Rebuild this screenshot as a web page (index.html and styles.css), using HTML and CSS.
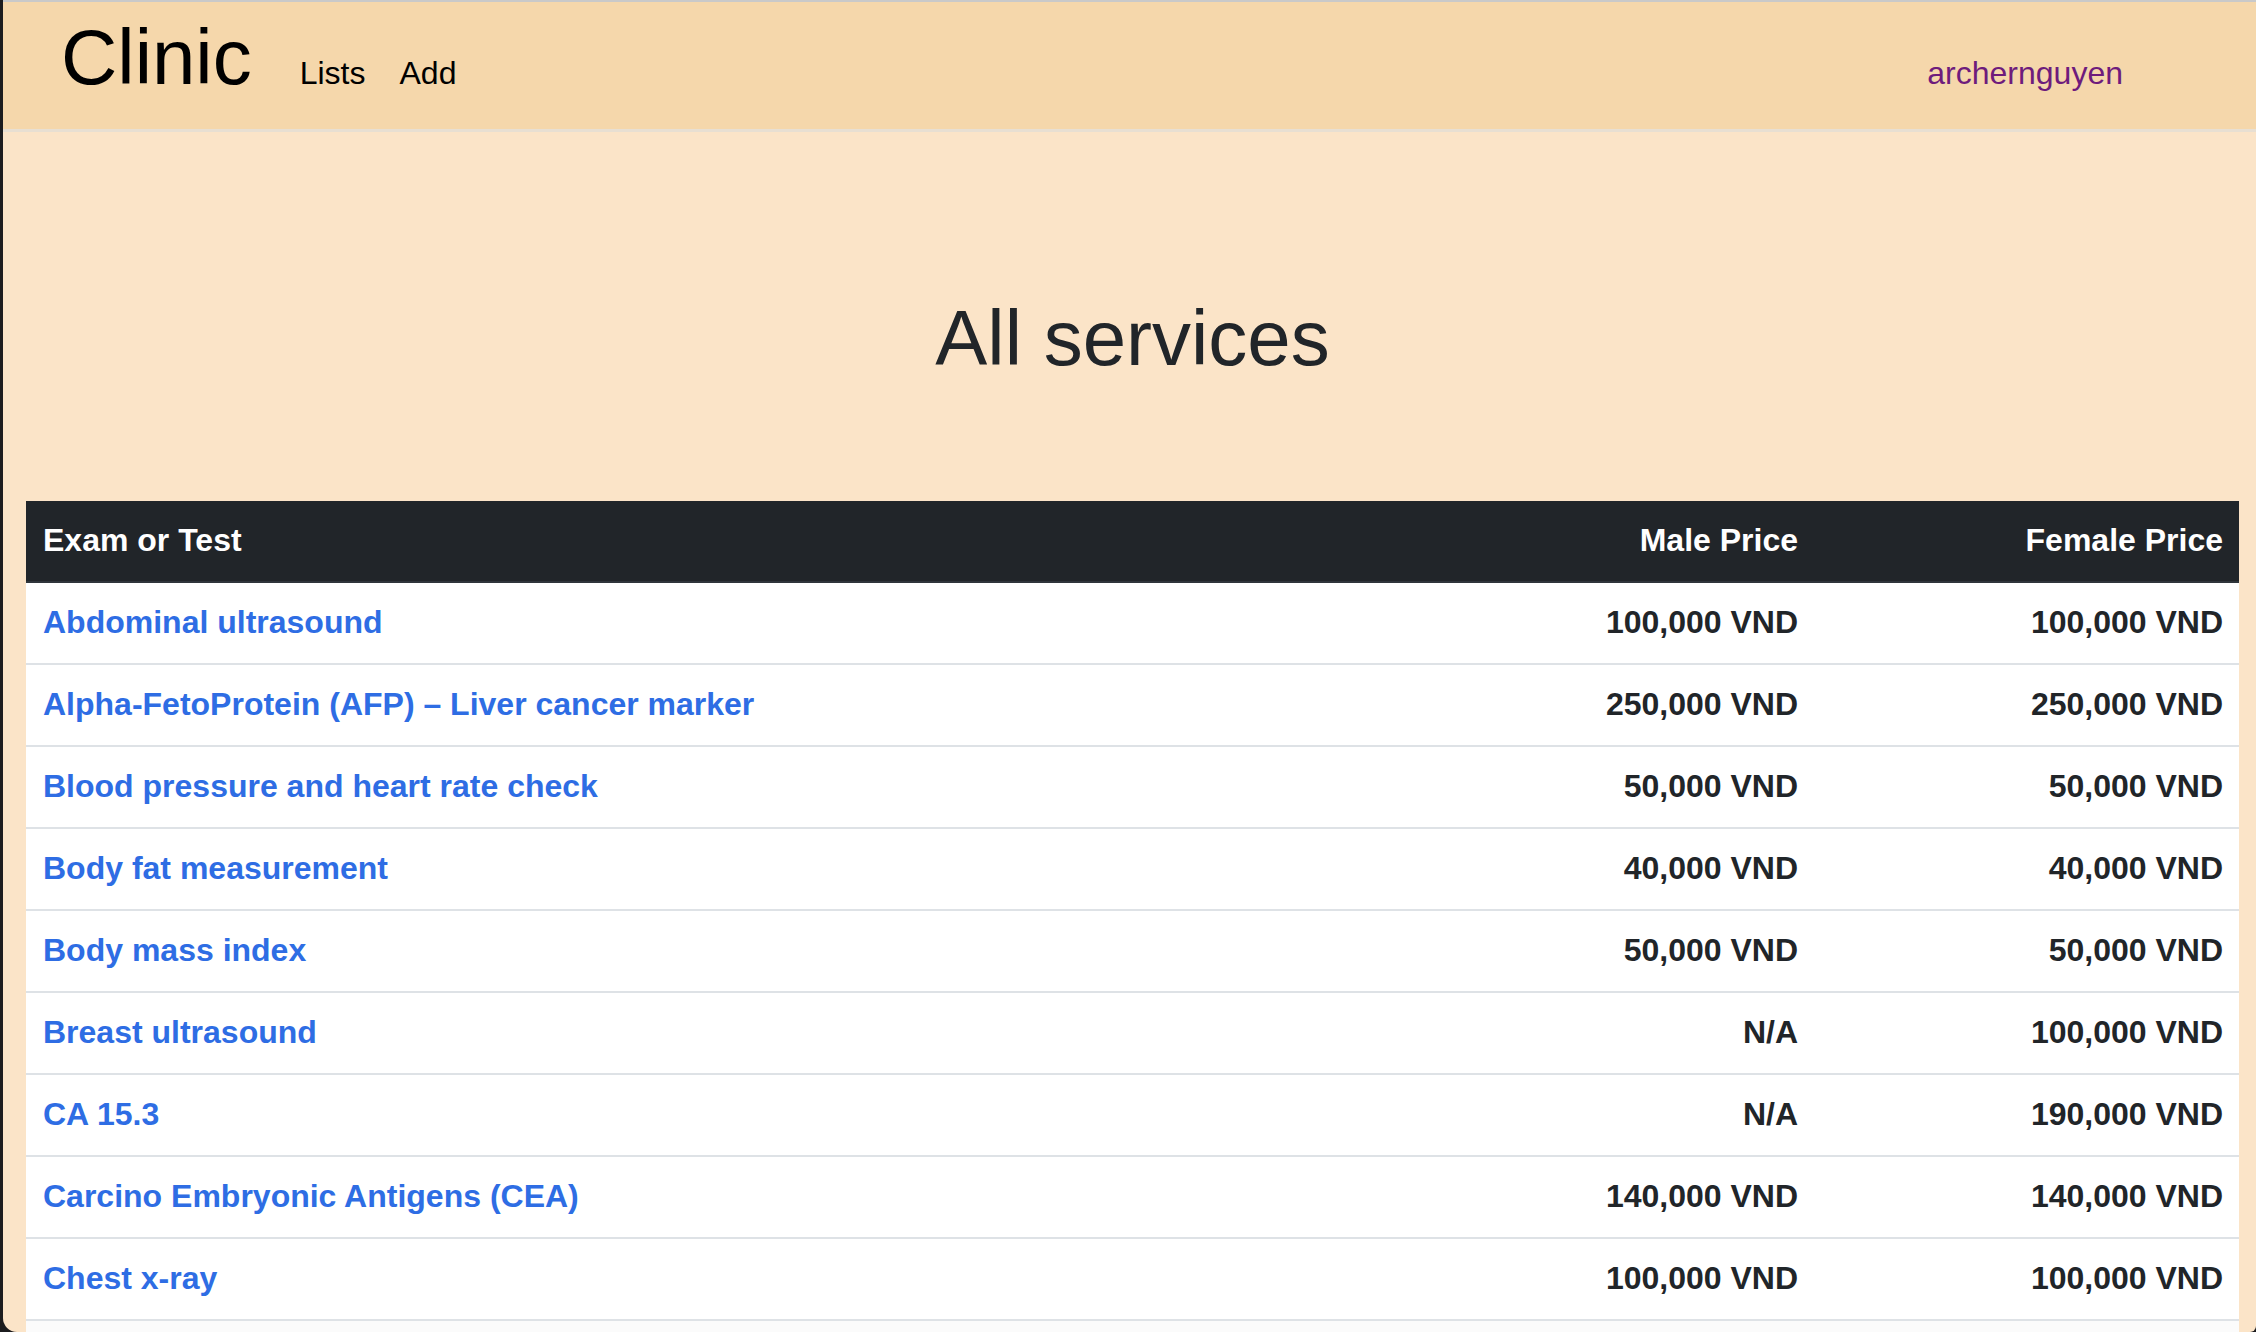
FILE: index.html
```html
<!DOCTYPE html>
<html lang="en">
<head>
<meta charset="utf-8">
<title>Clinic - All services</title>
<link rel="stylesheet" href="styles.css">
</head>
<body>
<div class="window">
  <header class="topbar">
    <a class="brand" href="#">Clinic</a>
    <nav class="nav">
      <a class="nav-link" href="#">Lists</a>
      <a class="nav-link" href="#">Add</a>
    </nav>
    <a class="user" href="#">archernguyen</a>
  </header>
  <main class="content">
    <h1 class="title">All services</h1>
    <table class="services">
      <thead>
        <tr>
          <th class="col-name">Exam or Test</th>
          <th class="col-price">Male Price</th>
          <th class="col-price col-last">Female Price</th>
        </tr>
      </thead>
      <tbody>
        <tr><td><a href="#">Abdominal ultrasound</a></td><td class="num">100,000 VND</td><td class="num">100,000 VND</td></tr>
        <tr><td><a href="#">Alpha-FetoProtein (AFP) – Liver cancer marker</a></td><td class="num">250,000 VND</td><td class="num">250,000 VND</td></tr>
        <tr><td><a href="#">Blood pressure and heart rate check</a></td><td class="num">50,000 VND</td><td class="num">50,000 VND</td></tr>
        <tr><td><a href="#">Body fat measurement</a></td><td class="num">40,000 VND</td><td class="num">40,000 VND</td></tr>
        <tr><td><a href="#">Body mass index</a></td><td class="num">50,000 VND</td><td class="num">50,000 VND</td></tr>
        <tr><td><a href="#">Breast ultrasound</a></td><td class="num">N/A</td><td class="num">100,000 VND</td></tr>
        <tr><td><a href="#">CA 15.3</a></td><td class="num">N/A</td><td class="num">190,000 VND</td></tr>
        <tr><td><a href="#">Carcino Embryonic Antigens (CEA)</a></td><td class="num">140,000 VND</td><td class="num">140,000 VND</td></tr>
        <tr><td><a href="#">Chest x-ray</a></td><td class="num">100,000 VND</td><td class="num">100,000 VND</td></tr>
        <tr class="row-more"><td>&nbsp;</td><td>&nbsp;</td><td>&nbsp;</td></tr>
      </tbody>
    </table>
  </main>
</div>
</body>
</html>
```

FILE: styles.css
```css
html, body {
  margin: 0;
  padding: 0;
  background: #1c1c1e;
  overflow: hidden;
}

body {
  font-family: "Liberation Sans", Arial, Helvetica, sans-serif;
  color: #212529;
}

.window {
  height: 100vh;
  box-sizing: border-box;
  margin-left: 3px;
  border-top: 2px solid #c9c9c9;
  background: #fbe4c8;
  border-bottom-left-radius: 14px;
  border-bottom-right-radius: 6px;
  overflow: hidden;
}

.topbar {
  display: flex;
  align-items: baseline;
  height: 130px;
  box-sizing: border-box;
  padding: 10px 133px 0 58px;
  background: #f5d7ab;
  border-bottom: 3px solid #e8dfd2;
}

.brand {
  font-size: 78px;
  color: #000;
  text-decoration: none;
  margin-right: 31px;
}

.nav {
  display: flex;
  align-items: baseline;
}

.nav-link {
  font-size: 32px;
  color: #000;
  text-decoration: none;
  padding: 0 17px;
}

.user {
  margin-left: auto;
  font-size: 32px;
  color: #6e1b7c;
  text-decoration: none;
}

.content {
  margin: 0 17px 0 23px;
}

.title {
  margin: 161px 0 117px;
  text-align: center;
  font-size: 78px;
  font-weight: 400;
  line-height: normal;
  color: #212529;
}

.services {
  width: 100%;
  border-collapse: collapse;
  table-layout: fixed;
  background: #fff;
  font-size: 32px;
  font-weight: 700;
  line-height: 48px;
}

.services th,
.services td {
  padding: 15px 16px 17px 17px;
  border-bottom: 2px solid #dee2e6;
  white-space: nowrap;
}

.services thead th {
  background: #212529;
  color: #fff;
  border-bottom-color: #2f353b;
}

.col-name {
  text-align: left;
}

.col-price {
  width: 425px;
  box-sizing: border-box;
  text-align: right;
}

.num {
  text-align: right;
  color: #212529;
}

.services td a {
  color: #2e6de4;
  text-decoration: none;
}

.row-more td {
  background: #fbfbfb;
}
```
